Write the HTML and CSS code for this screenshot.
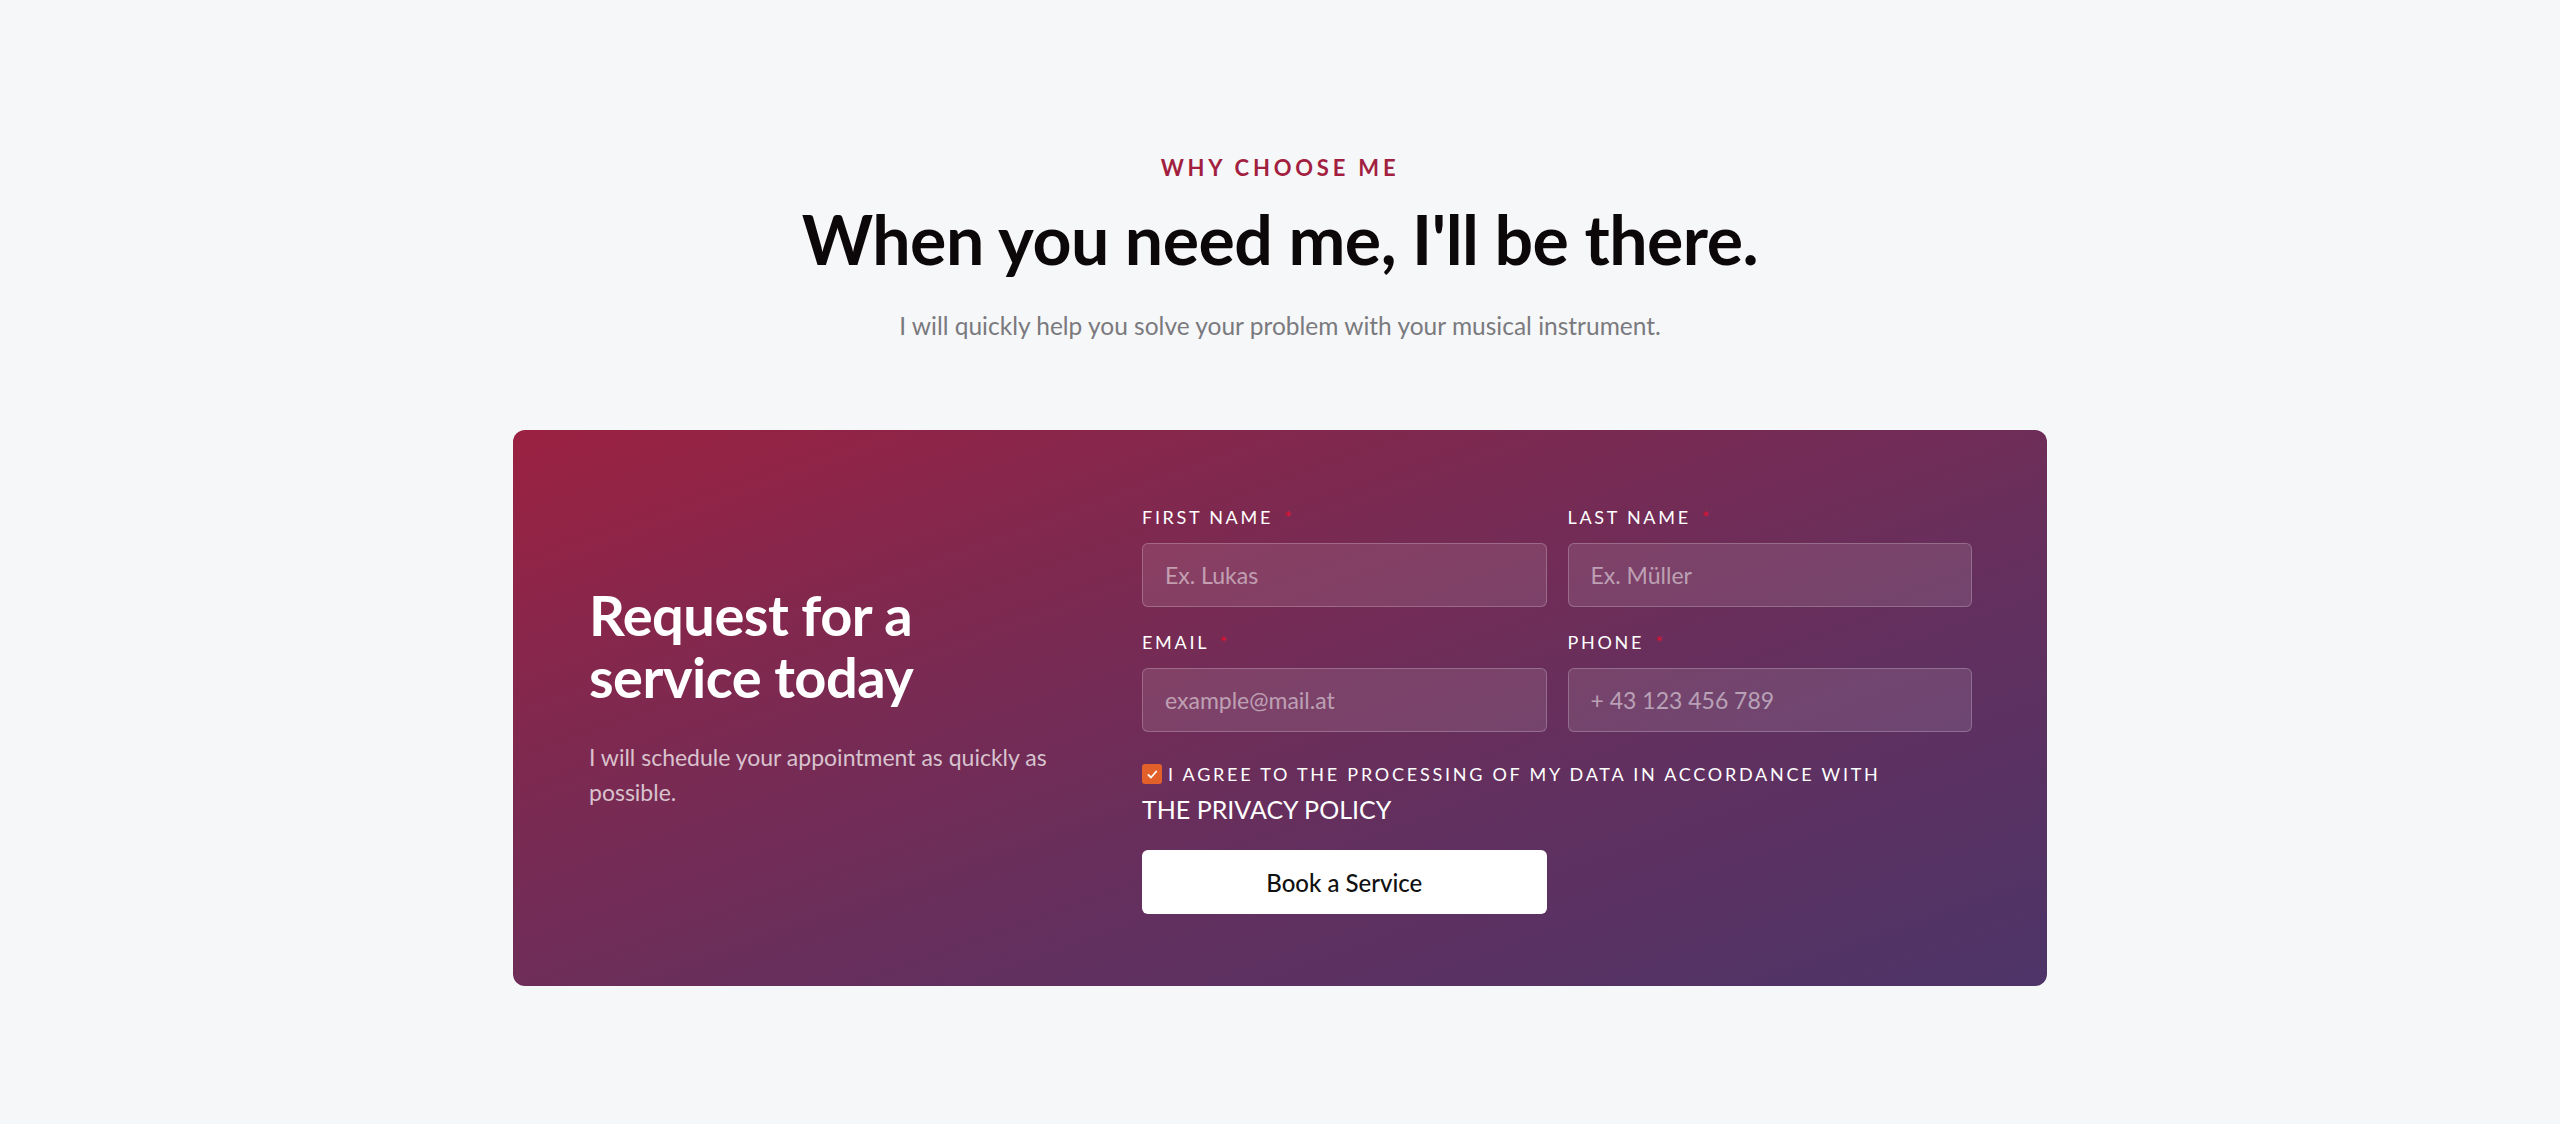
FILE: index.html
```html
<!DOCTYPE html>
<html lang="en">
<head>
<meta charset="utf-8">
<title>Why choose me</title>
<link rel="stylesheet" href="styles.css">
</head>
<body>
<section class="section">
  <p class="eyebrow">WHY CHOOSE ME</p>
  <h2 class="title">When you need me, I'll be there.</h2>
  <p class="lead">I will quickly help you solve your problem with your musical instrument.</p>

  <div class="card">
    <div class="intro">
      <h3 class="intro-title">Request for a service today</h3>
      <p class="intro-text">I will schedule your appointment as quickly as possible.</p>
    </div>
    <form class="form">
      <div class="grid">
        <div class="field">
          <label class="label">FIRST NAME <span class="req">*</span></label>
          <input class="input" type="text" placeholder="Ex. Lukas">
        </div>
        <div class="field">
          <label class="label">LAST NAME <span class="req">*</span></label>
          <input class="input" type="text" placeholder="Ex. Müller">
        </div>
        <div class="field">
          <label class="label">EMAIL <span class="req">*</span></label>
          <input class="input" type="email" placeholder="example@mail.at">
        </div>
        <div class="field">
          <label class="label">PHONE <span class="req">*</span></label>
          <input class="input" type="tel" placeholder="+ 43 123 456 789">
        </div>
      </div>
      <div class="consent">
        <label class="check">
          <span class="box"><svg viewBox="0 0 20 20" width="15" height="15"><path d="M4.5 10.5l3.5 3.5 7-8" fill="none" stroke="#fff" stroke-width="2.4" stroke-linecap="round" stroke-linejoin="round"/></svg></span>
          <span class="check-text">I AGREE TO THE PROCESSING OF MY DATA IN ACCORDANCE WITH</span>
        </label>
        <a class="policy" href="#">THE PRIVACY POLICY</a>
      </div>
      <div class="grid">
        <button class="btn" type="button">Book a Service</button>
      </div>
    </form>
  </div>
</section>
</body>
</html>
```

FILE: styles.css
```css
* { box-sizing: border-box; }
html, body { margin: 0; padding: 0; }
body {
  background: #f6f7f9;
  font-family: "Lato", "Open Sans", sans-serif;
  color: #111;
}
.section {
  padding: 155px 0 120px;
  display: flex;
  flex-direction: column;
  align-items: center;
}
.eyebrow {
  margin: 0;
  font-size: 22px;
  line-height: 26px;
  font-weight: 700;
  letter-spacing: 3.8px;
  color: #a21f40;
}
.title {
  margin: 19px 0 0;
  font-size: 68px;
  line-height: 78px;
  font-weight: 700;
  color: #0c0809;
  letter-spacing: -0.5px;
}
.lead {
  margin: 31px 0 0;
  font-size: 24.5px;
  line-height: 33px;
  color: #7a7a7e;
}
.card {
  margin-top: 88px;
  width: 1534px;
  height: 556px;
  border-radius: 12px;
  background: linear-gradient(to bottom right, #9b2141 0%, #7a2a52 35%, #62305f 65%, #4d3468 100%);
  padding: 74px 75px 74px 76px;
  display: grid;
  grid-template-columns: 553px 1fr;
}
.intro {
  align-self: center;
  max-width: 480px;
  padding-bottom: 24px;
}
.intro-title {
  margin: 0;
  font-size: 56px;
  line-height: 62px;
  font-weight: 700;
  color: #fff;
  letter-spacing: -0.5px;
}
.intro-text {
  margin: 32px 0 0;
  font-size: 23px;
  line-height: 35px;
  color: rgba(255, 255, 255, 0.72);
}
.form {
  display: flex;
  flex-direction: column;
}
.grid {
  display: grid;
  grid-template-columns: 1fr 1fr;
  column-gap: 21px;
  row-gap: 22px;
}
.field {
  display: flex;
  flex-direction: column;
  gap: 14px;
}
.label {
  font-size: 18px;
  line-height: 24px;
  letter-spacing: 2.7px;
  color: #fff;
  padding-top: 1px;
}
.req {
  color: #e3102f;
  margin-left: 4px;
}
.input {
  height: 64px;
  border-radius: 6px;
  border: 1.5px solid rgba(255, 255, 255, 0.22);
  background: rgba(255, 255, 255, 0.1);
  padding: 0 22px;
  font-family: inherit;
  font-size: 23px;
  color: #fff;
  outline: none;
}
.input::placeholder {
  color: rgba(255, 255, 255, 0.5);
}
.consent {
  margin-top: 30px;
  display: flex;
  flex-direction: column;
}
.check {
  display: flex;
  align-items: center;
  gap: 6px;
}
.box {
  width: 20px;
  height: 20px;
  border-radius: 3px;
  background: #e4602b;
  display: flex;
  align-items: center;
  justify-content: center;
}
.check-text {
  font-size: 18px;
  line-height: 24px;
  letter-spacing: 2.75px;
  color: #fff;
}
.policy {
  margin-top: 8px;
  font-size: 25px;
  line-height: 30px;
  color: #fff;
  text-decoration: none;
}
.btn {
  margin-top: 26px;
  height: 64px;
  border: none;
  border-radius: 6px;
  background: #fff;
  font-family: inherit;
  font-size: 24px;
  font-weight: 500;
  color: #111;
  cursor: pointer;
}
```
